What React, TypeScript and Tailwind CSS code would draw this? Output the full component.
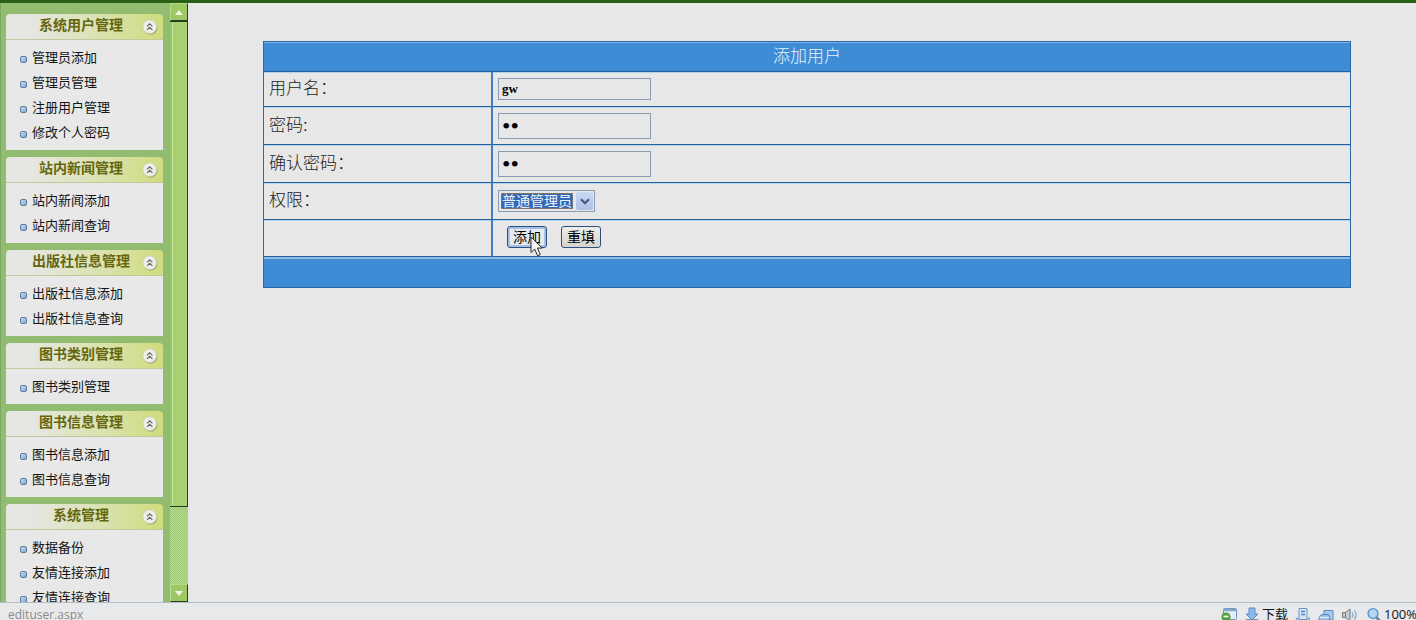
import { useState, type ReactNode } from 'react';

interface MenuGroup {
  title: string;
  items: string[];
}

const menuGroups: MenuGroup[] = [
  { title: '系统用户管理', items: ['管理员添加', '管理员管理', '注册用户管理', '修改个人密码'] },
  { title: '站内新闻管理', items: ['站内新闻添加', '站内新闻查询'] },
  { title: '出版社信息管理', items: ['出版社信息添加', '出版社信息查询'] },
  { title: '图书类别管理', items: ['图书类别管理'] },
  { title: '图书信息管理', items: ['图书信息添加', '图书信息查询'] },
  { title: '系统管理', items: ['数据备份', '友情连接添加', '友情连接查询'] },
];

function CollapseIcon() {
  return (
    <svg viewBox="0 0 16 16" className="w-4 h-4">
      <circle cx="8.6" cy="8.8" r="7" fill="#8f9660" opacity="0.6" />
      <circle cx="7.7" cy="7.7" r="6.9" fill="#eeeeea" stroke="#c4c6b4" strokeWidth="0.6" />
      <path d="M5 7.3 7.7 4.8l2.7 2.5M5 10.8l2.7-2.5 2.7 2.5" fill="none" stroke="#66675e" strokeWidth="1.1" />
    </svg>
  );
}

function MenuPanel({ group }: { group: MenuGroup }) {
  const [open, setOpen] = useState(true);

  return (
    <section>
      <button
        onClick={() => setOpen(!open)}
        className="flex items-center w-full h-[26px] pr-[5px] rounded-t border-b border-[#c3c99c] bg-linear-to-r from-[#e6e7e3] from-15% to-[#d0dc7c]"
      >
        <span className="flex-1 pl-3.5 pb-1 text-center text-[14px] leading-5 font-bold text-[#66660e]">{group.title}</span>
        <CollapseIcon />
      </button>
      {open && (
        <ul className="py-[5px] bg-[#e7e8e7]">
          {group.items.map((item) => (
            <li key={item} className="flex items-center h-[25px] pl-3.5">
              <span className="w-[7px] h-[7px] mt-1 mr-[5px] rounded-[2px] border border-[#62799a] bg-linear-to-br from-[#c4def4] to-[#7da6d8]" />
              <a href="#" className="text-[13px] leading-5 text-[#151515]">{item}</a>
            </li>
          ))}
        </ul>
      )}
    </section>
  );
}

function ScrollButton({ label, points }: { label: string; points: string }) {
  return (
    <button
      aria-label={label}
      className="flex items-center justify-center shrink-0 w-full h-[18px] border-t border-l border-t-[#b9d98c] border-l-[#b9d98c] border-b border-r border-b-[#26401c] border-r-[#26401c] bg-[#9cc963]"
    >
      <svg viewBox="0 0 8 5" className="w-2 h-[5px]">
        <polygon points={points} fill="#eef5e2" />
      </svg>
    </button>
  );
}

function Scrollbar() {
  return (
    <div className="flex flex-col shrink-0 w-[18px] bg-[repeating-conic-gradient(#9ccb70_0_25%,#b8d994_0_50%)] bg-[length:2px_2px]">
      <ScrollButton label="向上滚动" points="4,0 8,5 0,5" />
      <div className="grow-[486] basis-0 border-t border-b border-r border-[#26401c] bg-[#a9d070]">
        <div className="w-[3px] h-full border-r border-[#c5e49b] bg-[#9ac765]" />
      </div>
      <div className="grow-[77] basis-0" />
      <ScrollButton label="向下滚动" points="0,0 8,0 4,5" />
    </div>
  );
}

function FormRow({ label, id, height, children }: {
  label: string;
  id?: string;
  height: string;
  children: ReactNode;
}) {
  return (
    <tr className={height}>
      <td className="w-[229px] px-[5px] border-b border-r-2 border-b-[#23609f] border-r-[#3f7fc2] shadow-[inset_0_1px_0_#b4d2ea]">
        {id && <label htmlFor={id}>{label}</label>}
      </td>
      <td className="px-[5px] border-b border-[#23609f] shadow-[inset_0_1px_0_#b4d2ea]">{children}</td>
    </tr>
  );
}

function UserForm() {
  const field = 'block w-[153px] px-[3px] border border-[#8a9cb4] bg-[#e6e7e6] text-black outline-none';

  return (
    <form onSubmit={(e) => e.preventDefault()}>
      <table className="w-full border-separate border-spacing-0 border border-[#2a68aa] text-[17px] leading-6 font-light text-[#1c1c1c]">
        <thead>
          <tr className="h-[30px]">
            <th colSpan={2} className="p-0 border-t border-b border-t-[#7fb2e2] border-b-[#23609f] bg-[#3f8cd6] font-light text-[#eaf2fa]">
              添加用户
            </th>
          </tr>
        </thead>
        <tbody>
          <FormRow label="用户名：" id="username" height="h-[35px]">
            <input id="username" type="text" defaultValue="gw" className={`${field} h-[22px] font-['Liberation_Serif'] text-[13px] font-semibold`} />
          </FormRow>
          <FormRow label="密码:" id="password" height="h-[38px]">
            <input id="password" type="password" defaultValue="gw" className={`${field} h-[26px] font-['DejaVu_Sans'] text-[24px]`} />
          </FormRow>
          <FormRow label="确认密码：" id="confirm" height="h-[38px]">
            <input id="confirm" type="password" defaultValue="gw" className={`${field} h-[26px] font-['DejaVu_Sans'] text-[24px]`} />
          </FormRow>
          <FormRow label="权限：" id="role" height="h-[37px]">
            <div className="flex items-center w-[97px] h-[22px] p-px border border-[#8a9cb4]">
              <select id="role" className="flex-1 min-w-0 h-4 mx-px px-px appearance-none outline-1 -outline-offset-1 outline-dotted outline-[#8f8a80] bg-[#3568b4] text-[14px] leading-4 font-normal text-[#eef2f8]">
                <option>普通管理员</option>
                <option>超级管理员</option>
              </select>
              <span className="flex items-center justify-center w-[17px] h-[18px] ml-0.5 rounded-[2px] bg-linear-to-b from-[#cbd9f5] to-[#aebfe8]">
                <svg viewBox="0 0 10 7" className="w-2.5 h-[7px]">
                  <path d="M1 1.2 5 5.2 9 1.2" fill="none" stroke="#45587e" strokeWidth="2.2" />
                </svg>
              </span>
            </div>
          </FormRow>
          <FormRow label="" height="h-[37px]">
            <div className="flex gap-3.5 pl-[9px] pb-0.5 text-[14px] font-normal text-black">
              <button type="submit" className="relative w-10 h-[22px] rounded-[3px] border border-[#2c4f80] bg-[#e8ebee] leading-[18px] shadow-[inset_0_0_0_2px_#a3bfe8]">
                添加
                <svg viewBox="0 0 13 21" className="absolute left-[22px] top-[9px] w-[13px] h-[21px]">
                  <path d="M1 1v15.5l3.7-3.4 2.9 6.7 2.7-1.2-2.9-6.5h4.8z" fill="#f4f4f4" stroke="#2c2c2c" strokeWidth="1" />
                </svg>
              </button>
              <button type="reset" className="w-10 h-[22px] rounded-[3px] border border-[#2c4f80] bg-linear-to-b from-[#eeeeec] to-[#d6d4cc] leading-[18px]">
                重填
              </button>
            </div>
          </FormRow>
        </tbody>
        <tfoot>
          <tr className="h-[30px]">
            <td colSpan={2} className="p-0 border-t-2 border-[#8dbbe4] bg-[#3f8cd6]" />
          </tr>
        </tfoot>
      </table>
    </form>
  );
}

function StatusBar() {
  return (
    <footer className="shrink-0 h-[18px] overflow-hidden border-t border-[#b4bcc8] bg-[#e8e9ea]">
      <div className="flex items-center justify-between h-6 pl-2">
        <span className="font-['Open_Sans'] text-[12px] text-[#8a8a8a]">edituser.aspx</span>
        <div className="flex items-center gap-[7px] text-[13px] text-[#161616]">
          <svg viewBox="0 0 16 16" className="w-4 h-4">
            <rect x="2.5" y="1.5" width="13" height="11" rx="1" fill="#e4edf5" stroke="#6f94b8" />
            <path d="M2.5 3h13" stroke="#7fa9d2" strokeWidth="2.4" />
            <circle cx="5" cy="10" r="4.6" fill="#4f9e3c" />
            <path d="M2.5 9.5h5" stroke="#f2f8ee" strokeWidth="1.8" />
          </svg>
          <a href="#" className="flex items-center gap-0.5">
            <svg viewBox="0 0 16 16" className="w-4 h-4">
              <path d="M5 1h6v6h3l-6 6-6-6h3z" fill="#8ab8ea" stroke="#5d8cc4" />
              <path d="M2 12.5h12v3H2z" fill="#b8d0ea" stroke="#6f94b8" />
            </svg>
            下载
          </a>
          <svg viewBox="0 0 16 16" className="w-4 h-4">
            <path d="M4 1.5h8v11H4z" fill="#d6e6f5" stroke="#6a96c6" />
            <path d="M6 4.5h4M6 7.5h4" stroke="#5686bc" strokeWidth="1.4" />
            <path d="M1.5 15v-3.5H4M12 11.5h2.5V15" fill="none" stroke="#7ea4cf" strokeWidth="1.4" />
          </svg>
          <svg viewBox="0 0 16 16" className="w-4 h-4">
            <path d="M6 7V3.5h9V13h-4" fill="#a9c9ea" stroke="#5d8cc0" />
            <path d="M1 10 3.5 7.5h7l1 2.5v4H1z" fill="#8fb9e6" stroke="#5d8cc0" />
            <path d="M1.5 10.5H11" stroke="#e3eefa" strokeWidth="1.4" />
          </svg>
          <svg viewBox="0 0 18 16" className="w-[18px] h-4">
            <path d="M1.5 5.5h3L9 2v12l-4.5-3.5h-3z" fill="#c9cbcd" stroke="#74787c" />
            <path d="M4.5 5.5v5" stroke="#74787c" />
            <path d="M11 5.5q2 2.5 0 5M13.3 3.5q3.4 4.5 0 9" fill="none" stroke="#7ba6da" strokeWidth="1.2" />
          </svg>
          <button className="flex items-center gap-0.5">
            <svg viewBox="0 0 16 16" className="w-4 h-4">
              <path d="m10 10 4.5 4.5" stroke="#777f8a" strokeWidth="2.6" strokeLinecap="round" />
              <circle cx="7" cy="6.5" r="4.9" fill="#b5d6f5" stroke="#5e92cc" strokeWidth="1.4" />
            </svg>
            <span className="w-8 whitespace-nowrap font-['Open_Sans'] text-[13px]">100%</span>
          </button>
        </div>
      </div>
    </footer>
  );
}

export default function App() {
  return (
    <div className="flex flex-col h-screen overflow-hidden bg-[#e6e7e6] font-['Liberation_Sans','Noto_Sans_CJK_SC',sans-serif]">
      <div className="shrink-0 h-[3px] bg-[#286018]" />
      <div className="flex flex-1 min-h-0">
        <aside className="flex shrink-0 w-[188px] bg-[#92bd70]">
          <nav className="flex flex-col flex-1 gap-[7px] pt-[11px] pl-1.5 pr-[7px] overflow-hidden shadow-[inset_1px_0_0_#7da563]">
            {menuGroups.map((group) => (
              <MenuPanel key={group.title} group={group} />
            ))}
          </nav>
          <Scrollbar />
        </aside>
        <main className="flex-1 pt-[38px] pl-[75px] pr-[65px] overflow-hidden">
          <UserForm />
        </main>
      </div>
      <StatusBar />
    </div>
  );
}
